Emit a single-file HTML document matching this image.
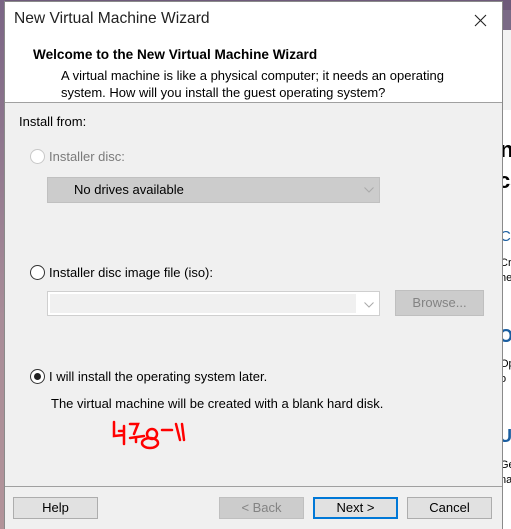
<!DOCTYPE html>
<html><head><meta charset="utf-8"><style>
*{margin:0;padding:0;box-sizing:border-box}
body{width:511px;height:529px;overflow:hidden;position:relative;background:#fff;font-family:"Liberation Sans","Noto Sans CJK KR",sans-serif;font-size:13px;color:#000}
.a{position:absolute;white-space:nowrap}
.btn{position:absolute;height:22px;background:#e1e1e1;border:1px solid #adadad;text-align:center;line-height:20px;font-size:13px}
.rad{position:absolute;width:15px;height:15px;border-radius:50%;border:1px solid #333;background:#fff}
</style></head><body>
<div class="a" style="left:0;top:0;width:511px;height:10px;background:#6e5a7a"></div>
<div class="a" style="left:0;top:0;width:5px;height:529px;background:linear-gradient(#7a6585,#a88c98 60%,#b29399)"></div>
<div class="a" style="left:502px;top:10px;width:9px;height:20px;background:#7a6a86"></div>
<div class="a" style="left:502px;top:30px;width:9px;height:80px;background:#f3f3f3"></div>
<div class="a" style="left:500px;top:137px;font-weight:bold;font-size:22px">n</div>
<div class="a" style="left:498px;top:168px;font-weight:bold;font-size:22px">ca</div>
<div class="a" style="left:500px;top:228px;color:#1a5ea0;font-size:15px">Cr</div>
<div class="a" style="left:500px;top:256px;font-size:11px;line-height:15px">Cr<br>he</div>
<div class="a" style="left:499px;top:326px;color:#1a5ea0;font-weight:bold;font-size:18px">O</div>
<div class="a" style="left:500px;top:357px;font-size:11px;line-height:15px">Op<br>o</div>
<div class="a" style="left:499px;top:426px;color:#1a5ea0;font-weight:bold;font-size:18px">U</div>
<div class="a" style="left:500px;top:458px;font-size:11px;line-height:15px">Ge<br>na</div>

<div class="a" style="left:4px;top:1px;width:499px;height:528px;background:#f0f0f0;border:1px solid #8a8a8a;border-bottom:none"></div>
<div class="a" style="left:5px;top:2px;width:497px;height:101px;background:#fff;border-bottom:1px solid #a0a0a0"></div>
<div class="a" style="left:14px;top:10px;font-size:15.6px;color:#222">New Virtual Machine Wizard</div>
<svg class="a" style="left:474px;top:14px" width="13" height="13"><path d="M1 1L12 12M12 1L1 12" stroke="#222" stroke-width="1.1"/></svg>
<div class="a" style="left:33px;top:47px;font-weight:bold;font-size:13.6px">Welcome to the New Virtual Machine Wizard</div>
<div class="a" style="left:61px;top:67px;line-height:17px">A virtual machine is like a physical computer; it needs an operating<br>system. How will you install the guest operating system?</div>

<div class="a" style="left:19px;top:114px">Install from:</div>
<div class="rad" style="left:30px;top:149px;border-color:#c8c8c8"></div>
<div class="a" style="left:49px;top:149px;color:#7a7a7a">Installer disc:</div>
<div class="a" style="left:47px;top:177px;width:333px;height:26px;background:#cccccc;border:1px solid #c0c0c0"></div>
<div class="a" style="left:74px;top:182px">No drives available</div>
<svg class="a" style="left:364px;top:187px" width="10" height="6"><path d="M0.5 0.5L5 5L9.5 0.5" stroke="#aaa" fill="none"/></svg>

<div class="rad" style="left:30px;top:265px"></div>
<div class="a" style="left:49px;top:265px">Installer disc image file (iso):</div>
<div class="a" style="left:47px;top:291px;width:333px;height:25px;background:#fff;border:1px solid #cfcfcf"></div>
<div class="a" style="left:50px;top:294px;width:306px;height:19px;background:#f0f0f0"></div>
<svg class="a" style="left:364px;top:302px" width="10" height="6"><path d="M0.5 0.5L5 5L9.5 0.5" stroke="#aaa" fill="none"/></svg>
<div class="btn" style="left:395px;top:290px;width:89px;height:26px;line-height:24px;background:#cccccc;border-color:#bfbfbf;color:#838383">Browse...</div>

<div class="rad" style="left:30px;top:369px;border-color:#333"></div>
<div class="a" style="left:34px;top:373px;width:7px;height:7px;border-radius:50%;background:#222"></div>
<div class="a" style="left:49px;top:369px">I will install the operating system later.</div>
<div class="a" style="left:51px;top:396px">The virtual machine will be created with a blank hard disk.</div>
<svg class="a" style="left:110px;top:418px" width="100" height="42"><g stroke="#f00" stroke-width="2.5" fill="none" stroke-linecap="round"><path d="M4 4L4 18L14 17M14 8L14 26M9 13L14 13M20 6L28 6L24 16M20 20L34 18M26 20L26 24M52 12L62 12M66 6L70 22M72 6L74 22"/><ellipse cx="40" cy="25" rx="8" ry="5"/><ellipse cx="42" cy="16" rx="5" ry="5"/></g></svg>

<div class="a" style="left:5px;top:486px;width:497px;height:1px;background:#a0a0a0"></div>
<div class="btn" style="left:13px;top:497px;width:85px">Help</div>
<div class="btn" style="left:219px;top:497px;width:85px;background:#cccccc;border-color:#bfbfbf;color:#838383">&lt; Back</div>
<div class="btn" style="left:313px;top:497px;width:85px;border:2px solid #0078d7;line-height:18px">Next &gt;</div>
<div class="btn" style="left:407px;top:497px;width:85px">Cancel</div>
</body></html>
